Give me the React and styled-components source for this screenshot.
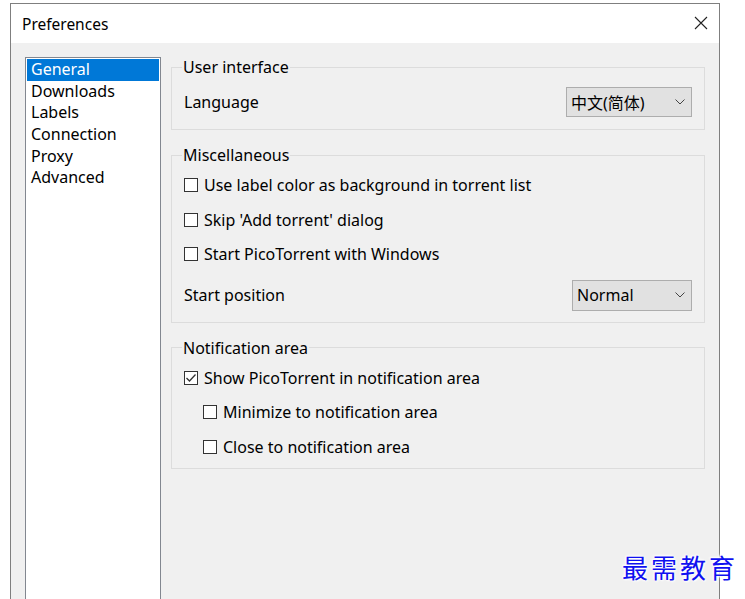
import React from 'react'
import styled, { createGlobalStyle } from 'styled-components'

const GlobalStyle = createGlobalStyle`
  html, body {
    margin: 0;
    padding: 0;
    background: #ffffff;
    overflow: hidden;
  }
  body {
    font-family: "Noto Sans", "Noto Sans CJK SC", sans-serif;
    font-size: 16px;
    color: #000;
  }
`

const Window = styled.div`
  margin: 3px 0 0 10px;
  width: 708px;
  height: 640px;
  border: 1px solid #7f7f7f;
  display: flex;
  flex-direction: column;
  background: #f0f0f0;
`

const TitleBar = styled.div`
  height: 39px;
  background: #fff;
  display: flex;
  align-items: center;
  justify-content: space-between;
  padding: 0 10px 0 11px;
  flex-shrink: 0;
`

const Title = styled.span`
  font-size: 15.5px;
`

const CloseButton = styled.button`
  border: none;
  background: transparent;
  padding: 0;
  width: 16px;
  height: 16px;
  display: flex;
  align-items: center;
  justify-content: center;
  margin-top: -2px;
`

const Body = styled.div`
  flex: 1;
  display: flex;
  gap: 10px;
  padding: 14px 14px 0 14px;
`

const ListBox = styled.ul`
  list-style: none;
  margin: 0;
  padding: 1px;
  width: 132px;
  flex-shrink: 0;
  background: #fff;
  border: 1px solid #828790;
`

const ListItem = styled.li`
  height: 21.7px;
  line-height: 21.7px;
  padding-left: 4px;
  background: ${(p) => (p.$selected ? '#0078d7' : 'transparent')};
  color: ${(p) => (p.$selected ? '#fff' : '#000')};
`

const Panel = styled.div`
  flex: 1;
  display: flex;
  flex-direction: column;
  gap: 15px;
`

const Group = styled.fieldset`
  margin: 0;
  border: 1px solid #dcdcdc;
  padding: ${(p) => p.$pad || '3px 12px 4px 12px'};
  min-width: 0;
`

const Legend = styled.legend`
  padding: 0 1px;
  margin-left: -2px;
  line-height: 20px;
`

const FieldRow = styled.div`
  display: flex;
  align-items: center;
  justify-content: space-between;
  margin-top: ${(p) => p.$top || 0}px;
`

const Combo = styled.div`
  width: ${(p) => p.$width}px;
  height: ${(p) => p.$height}px;
  box-sizing: border-box;
  background: #e1e1e1;
  border: 1px solid #adadad;
  display: flex;
  align-items: center;
  justify-content: space-between;
  padding: 0 6px 0 4px;
`

const CheckRow = styled.label`
  display: flex;
  align-items: center;
  gap: 6px;
  height: 34.5px;
  padding-left: ${(p) => (p.$indent ? 19 : 0)}px;
`

const Box = styled.span`
  width: 14px;
  height: 14px;
  box-sizing: border-box;
  border: 1px solid #333;
  background: #fff;
  display: flex;
  align-items: center;
  justify-content: center;
  flex-shrink: 0;
`

const Watermark = styled.div`
  position: absolute;
  left: 622px;
  top: 548px;
  font-family: "Noto Sans CJK SC", sans-serif;
  font-size: 26px;
  letter-spacing: 3px;
  color: #1010f0;
  text-shadow: 0 0 2px #fff, 1px 1px 2px #fff, -1px -1px 2px #fff, 0 0 3px #fff;
`

const Chevron = () => (
  <svg width="10" height="6" viewBox="0 0 10 6">
    <path d="M0.5 0.5 L5 5 L9.5 0.5" fill="none" stroke="#444" strokeWidth="1" />
  </svg>
)

const Checkbox = ({ checked, indent, children }) => (
  <CheckRow $indent={indent}>
    <Box>
      {checked && (
        <svg width="12" height="12" viewBox="0 0 12 12">
          <path d="M1.5 6 L4.5 9 L10.5 2.5" fill="none" stroke="#333" strokeWidth="1.3" />
        </svg>
      )}
    </Box>
    {children}
  </CheckRow>
)

const pages = ['General', 'Downloads', 'Labels', 'Connection', 'Proxy', 'Advanced']

const App = () => {
  return (
    <>
      <GlobalStyle />
      <Window>
        <TitleBar>
          <Title>Preferences</Title>
          <CloseButton aria-label='close'>
            <svg width="14" height="14" viewBox="0 0 14 14">
              <path d="M1 1 L13 13 M13 1 L1 13" stroke="#222" strokeWidth="1.1" />
            </svg>
          </CloseButton>
        </TitleBar>
        <Body>
          <ListBox>
            {pages.map((p, i) => (
              <ListItem key={p} $selected={i === 0}>{p}</ListItem>
            ))}
          </ListBox>
          <Panel>
            <Group $pad='10px 12px 12px 12px'>
              <Legend>User interface</Legend>
              <FieldRow>
                <span>Language</span>
                <Combo $width={126} $height={30}>
                  <span>中文(简体)</span>
                  <Chevron />
                </Combo>
              </FieldRow>
            </Group>
            <Group $pad='3px 12px 11px 12px'>
              <Legend>Miscellaneous</Legend>
              <Checkbox>Use label color as background in torrent list</Checkbox>
              <Checkbox>Skip 'Add torrent' dialog</Checkbox>
              <Checkbox>Start PicoTorrent with Windows</Checkbox>
              <FieldRow $top={8}>
                <span>Start position</span>
                <Combo $width={120} $height={31}>
                  <span>Normal</span>
                  <Chevron />
                </Combo>
              </FieldRow>
            </Group>
            <Group>
              <Legend>Notification area</Legend>
              <Checkbox checked>Show PicoTorrent in notification area</Checkbox>
              <Checkbox indent>Minimize to notification area</Checkbox>
              <Checkbox indent>Close to notification area</Checkbox>
            </Group>
          </Panel>
        </Body>
      </Window>
      <Watermark>最需教育</Watermark>
    </>
  )
}

export default App
